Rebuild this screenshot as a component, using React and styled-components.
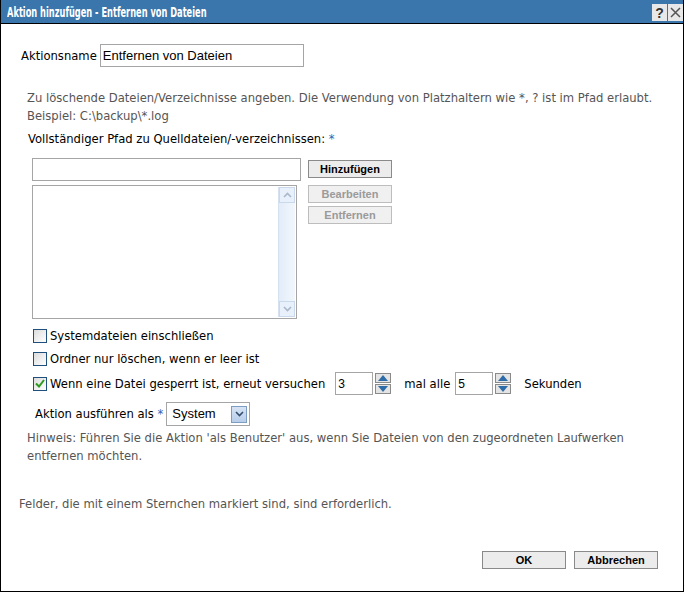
import React from "react";
import styled, { createGlobalStyle } from "styled-components";

const GlobalStyle = createGlobalStyle`
    html, body {
        margin: 0;
        padding: 0;
        background: #fff;
    }
    body {
        font-family: "DejaVu Sans", Verdana, sans-serif;
        font-size: 11.6px;
        line-height: 16px;
    }
`;

const Window = styled.div`
    width: 684px;
    height: 592px;
    box-sizing: border-box;
    border: 1px solid #000;
    border-top: none;
    display: flex;
    flex-direction: column;
    background: #fff;
`;

const TitleBar = styled.div`
    height: 23px;
    background: #3a76ab;
    border-bottom: 1px solid #000;
    display: flex;
    align-items: center;
    justify-content: space-between;
    padding-left: 6px;
    padding-right: 0;
`;

const Title = styled.div`
    color: #fff;
    font-family: "DejaVu Sans", sans-serif;
    font-weight: bold;
    font-size: 14px;
    transform: scaleX(0.59);
    transform-origin: left center;
    white-space: nowrap;
`;

const TitleButtons = styled.div`
    display: flex;
    gap: 1px;
    align-self: flex-end;
    margin-bottom: 2px;
`;

const TitleButton = styled.div`
    width: 15px;
    height: 17px;
    background: #e8e8e8;
    color: #333;
    font-family: "Liberation Sans", Arial, sans-serif;
    font-weight: bold;
    font-size: 14px;
    display: flex;
    align-items: center;
    justify-content: center;
`;

const Content = styled.div`
    flex: 1;
    display: flex;
    flex-direction: column;
    padding: 20px 0 0 0;
`;

const Row = styled.div`
    display: flex;
    align-items: center;
    padding-left: ${(p) => p.$left || 0}px;
    margin-top: ${(p) => p.$top || 0}px;
`;

const Label = styled.span`
    color: #000;
    white-space: nowrap;
    margin-right: ${(p) => p.$gap || 0}px;
    margin-left: ${(p) => p.$before || 0}px;
`;

const Star = styled.span`
    color: #2f63b8;
`;

const Help = styled.div`
    color: #555;
    line-height: 18px;
    padding-left: ${(p) => p.$left || 26}px;
    margin-top: ${(p) => p.$top || 0}px;
`;

const TextInput = styled.div`
    box-sizing: border-box;
    width: ${(p) => p.$w}px;
    height: 23px;
    border: 1px solid #a5a5a5;
    background: #fff;
    font-family: "Liberation Sans", Arial, sans-serif;
    font-size: 13px;
    color: #000;
    display: flex;
    align-items: center;
    padding-left: 2px;
`;

const Button = styled.div`
    box-sizing: border-box;
    width: 84px;
    height: 18px;
    border: 1px solid ${(p) => (p.$disabled ? "#bdbdbd" : "#8a8a8a")};
    background: ${(p) => (p.$disabled ? "#f0f0f0" : "#ececec")};
    color: ${(p) => (p.$disabled ? "#9a9a9a" : "#000")};
    font-family: "Liberation Sans", Arial, sans-serif;
    font-weight: bold;
    font-size: 11px;
    display: flex;
    align-items: center;
    justify-content: center;
`;

const PathArea = styled.div`
    display: flex;
    gap: 7px;
    padding-left: 31px;
    margin-top: 11px;
`;

const PathLeft = styled.div`
    display: flex;
    flex-direction: column;
    gap: 4px;
`;

const PathRight = styled.div`
    display: flex;
    flex-direction: column;
    gap: 3px;
    padding-top: 2px;
    & > :first-child {
        margin-bottom: 4px;
    }
`;

const ListBox = styled.div`
    box-sizing: border-box;
    width: 265px;
    height: 134px;
    border: 1px solid #a5a5a5;
    display: flex;
    justify-content: flex-end;
    padding: 1px;
`;

const ScrollTrack = styled.div`
    width: 16px;
    background: linear-gradient(to right, #e2ecf8, #f2f7fd);
    border-left: 1px solid #d5e1ee;
    display: flex;
    flex-direction: column;
    justify-content: space-between;
`;

const ScrollButton = styled.div`
    height: 16px;
    background: #e8f0fb;
    border: 1px solid #c9d8ea;
    box-sizing: border-box;
    display: flex;
    align-items: center;
    justify-content: center;
`;

const CheckRow = styled.div`
    display: flex;
    align-items: center;
    padding-left: 32px;
    margin-top: ${(p) => p.$top || 0}px;
`;

const Box = styled.div`
    box-sizing: border-box;
    width: 14px;
    height: 14px;
    border: 1px solid #1f4f7d;
    background: linear-gradient(135deg, #dcdcdc, #fff);
    margin-right: 3px;
    display: flex;
    align-items: center;
    justify-content: center;
`;

const SmallInput = styled(TextInput)`
    width: 38px;
    height: 23px;
    font-size: 12px;
`;

const Spinner = styled.div`
    display: flex;
    flex-direction: column;
    gap: 1px;
    margin-left: 2px;
`;

const SpinHalf = styled.div`
    width: 16px;
    height: 10px;
    box-sizing: border-box;
    border: 1px solid #8a8a8a;
    background: #e4e4e4;
    display: flex;
    align-items: center;
    justify-content: center;
`;

const Select = styled.div`
    box-sizing: border-box;
    width: 84px;
    height: 24px;
    border: 1px solid #a5a5a5;
    display: flex;
    align-items: center;
    justify-content: space-between;
    padding: 0 2px 0 5px;
    font-family: "Liberation Sans", Arial, sans-serif;
    font-size: 13px;
`;

const SelectArrow = styled.div`
    width: 16px;
    height: 17px;
    box-sizing: border-box;
    border: 1px solid #7e9dc2;
    background: linear-gradient(#d6e4f5, #b7cde9);
    display: flex;
    align-items: center;
    justify-content: center;
`;

const Footer = styled.div`
    display: flex;
    justify-content: flex-end;
    gap: 8px;
    padding-right: 25px;
    margin-top: auto;
    margin-bottom: 22px;
`;

const Chevron = ({ up, color = "#aab8c8" }) => (
    <svg width="9" height="6" viewBox="0 0 9 6">
        <path
            d={up ? "M1 5 L4.5 1.5 L8 5" : "M1 1 L4.5 4.5 L8 1"}
            stroke={color}
            strokeWidth="1.6"
            fill="none"
        />
    </svg>
);

const Tri = ({ up }) => (
    <svg width="10" height="6" viewBox="0 0 10 6">
        <path d={up ? "M0 6 L5 0 L10 6 Z" : "M0 0 L5 6 L10 0 Z"} fill="#2d6ca8" />
    </svg>
);

const SpinBox = ({ value }) => (
    <>
        <SmallInput>{value}</SmallInput>
        <Spinner>
            <SpinHalf><Tri up /></SpinHalf>
            <SpinHalf><Tri /></SpinHalf>
        </Spinner>
    </>
);

const App = () => {
    return (
        <>
            <GlobalStyle />
            <Window>
                <TitleBar>
                    <Title>Aktion hinzufügen - Entfernen von Dateien</Title>
                    <TitleButtons>
                        <TitleButton>?</TitleButton>
                        <TitleButton>
                            <svg width="11" height="11" viewBox="0 0 11 11">
                                <path d="M1 1 L10 10 M10 1 L1 10" stroke="#555" strokeWidth="1.5" />
                            </svg>
                        </TitleButton>
                    </TitleButtons>
                </TitleBar>
                <Content>
                    <Row $left={20}>
                        <Label $gap={3}>Aktionsname</Label>
                        <TextInput $w={204}>Entfernen von Dateien</TextInput>
                    </Row>
                    <Help $top={22}>
                        Zu löschende Dateien/Verzeichnisse angeben. Die Verwendung von Platzhaltern wie *, ? ist im Pfad erlaubt.
                        <br />
                        Beispiel: C:\backup\*.log
                    </Help>
                    <Row $left={27} $top={6}>
                        <Label>Vollständiger Pfad zu Quelldateien/-verzeichnissen: <Star>*</Star></Label>
                    </Row>
                    <PathArea>
                        <PathLeft>
                            <TextInput $w={269} />
                            <ListBox>
                                <ScrollTrack>
                                    <ScrollButton><Chevron up /></ScrollButton>
                                    <ScrollButton><Chevron /></ScrollButton>
                                </ScrollTrack>
                            </ListBox>
                        </PathLeft>
                        <PathRight>
                            <Button>Hinzufügen</Button>
                            <Button $disabled>Bearbeiten</Button>
                            <Button $disabled>Entfernen</Button>
                        </PathRight>
                    </PathArea>
                    <CheckRow $top={9}>
                        <Box />
                        <Label>Systemdateien einschließen</Label>
                    </CheckRow>
                    <CheckRow $top={7}>
                        <Box />
                        <Label>Ordner nur löschen, wenn er leer ist</Label>
                    </CheckRow>
                    <CheckRow $top={5}>
                        <Box>
                            <svg width="10" height="9" viewBox="0 0 10 9">
                                <path d="M1 4.5 L4 7.5 L9 1" stroke="#2e9a1e" strokeWidth="2" fill="none" />
                            </svg>
                        </Box>
                        <Label $gap={10}>Wenn eine Datei gesperrt ist, erneut versuchen</Label>
                        <SpinBox value="3" />
                        <Label $before={13} $gap={5}>mal alle</Label>
                        <SpinBox value="5" />
                        <Label $before={13}>Sekunden</Label>
                    </CheckRow>
                    <Row $left={34} $top={7}>
                        <Label $gap={3}>Aktion ausführen als <Star>*</Star></Label>
                        <Select>
                            System
                            <SelectArrow><Chevron color="#34506e" /></SelectArrow>
                        </Select>
                    </Row>
                    <Help $top={3}>
                        Hinweis: Führen Sie die Aktion 'als Benutzer' aus, wenn Sie Dateien von den zugeordneten Laufwerken
                        <br />
                        entfernen möchten.
                    </Help>
                    <Help $left={18} $top={30}>
                        Felder, die mit einem Sternchen markiert sind, sind erforderlich.
                    </Help>
                    <Footer>
                        <Button>OK</Button>
                        <Button>Abbrechen</Button>
                    </Footer>
                </Content>
            </Window>
        </>
    );
};

export default App;
